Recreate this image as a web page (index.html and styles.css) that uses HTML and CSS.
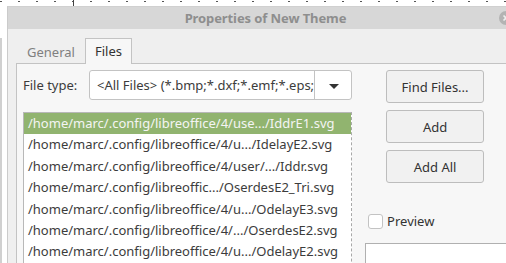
FILE: index.html
```html
<!DOCTYPE html>
<html lang="en">

<head>
  <meta charset="UTF-8">
  <title>Properties of New Theme</title>
  <link rel="stylesheet" href="styles.css">
</head>

<body>
  <div id="dialog">
    <div id="titlebar">
      <span class="title">Properties of New Theme</span>
      <svg class="close" width="14" height="14" viewBox="0 0 14 14">
        <circle cx="7" cy="7" r="7" fill="#b3b3b3"/>
        <path d="M4.5 4.5 L9.5 9.5 M9.5 4.5 L4.5 9.5" stroke="#eee" stroke-width="1.6"/>
      </svg>
    </div>

    <div id="tabs">
      <div class="tab">General</div>
      <div class="tab active">Files</div>
    </div>

    <div id="panel">
      <div class="left-col">
        <div class="type-row">
          <label class="type-label">File type:</label>
          <div class="combo">
            <span class="combo-text">&lt;All Files&gt; (*.bmp;*.dxf;*.emf;*.eps;</span>
            <span class="combo-arrow"></span>
          </div>
        </div>

        <ul class="file-list">
          <li class="selected">/home/marc/.config/libreoffice/4/use.../IddrE1.svg</li>
          <li>/home/marc/.config/libreoffice/4/u.../IdelayE2.svg</li>
          <li>/home/marc/.config/libreoffice/4/user/.../Iddr.svg</li>
          <li>/home/marc/.config/libreoffic.../OserdesE2_Tri.svg</li>
          <li>/home/marc/.config/libreoffice/4/u.../OdelayE3.svg</li>
          <li>/home/marc/.config/libreoffice/4/.../OserdesE2.svg</li>
          <li>/home/marc/.config/libreoffice/4/u.../OdelayE2.svg</li>
        </ul>
      </div>

      <div class="right-col">
        <button class="btn">Find Files...</button>
        <button class="btn">Add</button>
        <button class="btn">Add All</button>

        <label class="preview-check">
          <span class="box"></span>
          Preview
        </label>
        <div class="preview-area"></div>
      </div>
    </div>
  </div>
</body>

</html>
```

FILE: styles.css
```css
html, body {
  margin: 0;
  height: 100%;
  overflow: hidden;
}

body {
  font-family: "Noto Sans", "Open Sans", sans-serif;
  font-size: 13px;
  color: #3c3c3c;
  background-color: #fff;
  /* draw canvas behind the dialog */
  background-image:
    linear-gradient(#d0d0d0, #d0d0d0),
    linear-gradient(#444, #444),
    radial-gradient(circle, #555 0.8px, transparent 1px);
  background-size: 2px 100%, 1px 6px, 18px 5px;
  background-position: 0 38px, 73px 0, 82px -1px;
  background-repeat: no-repeat, no-repeat, repeat-x;
  padding: 6px 0 0 7px;
  box-sizing: border-box;
}

#dialog {
  width: 540px;
  height: 300px;
  background-color: #efefef;
  border-left: 1px solid #cbcbcb;
  border-top: 1px solid #d0d0d0;
  box-sizing: border-box;
}

#titlebar {
  height: 22px;
  background-color: #d7d7d7;
  display: flex;
  align-items: center;
  justify-content: center;
  position: relative;
}

.title {
  font-weight: bold;
  color: #8e8e8e;
  letter-spacing: -0.1px;
  margin-right: 24px;
}

.close {
  position: absolute;
  left: 491px;
  top: 4px;
}

#tabs {
  display: flex;
  align-items: flex-end;
  height: 34px;
  padding-left: 8px;
}

.tab {
  height: 24px;
  line-height: 24px;
  padding: 0 11px;
  color: #808080;
  margin-bottom: -1px;
}

.tab.active {
  height: 25px;
  color: #333;
  background-color: #f7f7f7;
  border: 1px solid #c3c3c3;
  border-bottom: none;
  margin-left: -1px;
  padding: 0 9px;
  position: relative;
  z-index: 1;
}

#panel {
  display: flex;
  gap: 13px;
  margin-left: 8px;
  height: 240px;
  background-color: #f7f7f7;
  border: 1px solid #c3c3c3;
  padding: 6px 0 0 6px;
  box-sizing: border-box;
}

.left-col {
  width: 330px;
  display: flex;
  flex-direction: column;
}

.type-row {
  display: flex;
  align-items: center;
  height: 30px;
}

.type-label {
  width: 66px;
}

.combo {
  flex: 1;
  height: 30px;
  display: flex;
  background-color: #fff;
  border: 1px solid #c3c3c3;
  border-radius: 3px;
  box-sizing: border-box;
}

.combo-text {
  flex: 1;
  padding-left: 7px;
  line-height: 28px;
  white-space: nowrap;
  overflow: hidden;
}

.combo-arrow {
  width: 36px;
  border-left: 1px solid #c3c3c3;
  position: relative;
}

.combo-arrow::after {
  content: "";
  position: absolute;
  left: 14px;
  top: 13px;
  border-left: 5px solid transparent;
  border-right: 5px solid transparent;
  border-top: 5px solid #333;
}

.file-list {
  list-style: none;
  margin: 12px 0 0;
  padding: 0;
  background-color: #fff;
  border-left: 1px solid #b8b8b8;
  border-top: 1px solid #b8b8b8;
  border-right: 1px dashed #a8a8a8;
  flex: 1;
}

.file-list li {
  height: 21.4px;
  line-height: 21px;
  padding-left: 4px;
  white-space: nowrap;
  overflow: hidden;
}

.file-list li.selected {
  background-color: #91b46f;
  color: #f4f4f4;
}

.right-col {
  flex: 1;
  display: flex;
  flex-direction: column;
  align-items: flex-start;
}

.btn {
  flex-shrink: 0;
  font: inherit;
  color: #333;
  width: 98px;
  height: 33px;
  margin: 0 0 7px 21px;
  background-color: #f1f1f1;
  border: 1px solid #bdbdbd;
  border-radius: 3px;
}

.preview-check {
  flex-shrink: 0;
  display: flex;
  align-items: center;
  gap: 4px;
  margin: 22px 0 0 3px;
  color: #333;
}

.box {
  width: 13px;
  height: 13px;
  border: 1px solid #c3c3c3;
  border-radius: 3px;
  background-color: #fff;
}

.preview-area {
  flex-shrink: 0;
  margin-top: 13px;
  width: 200px;
  height: 100px;
  background-color: #fff;
  border: 1px solid #b0b0b0;
}
```
